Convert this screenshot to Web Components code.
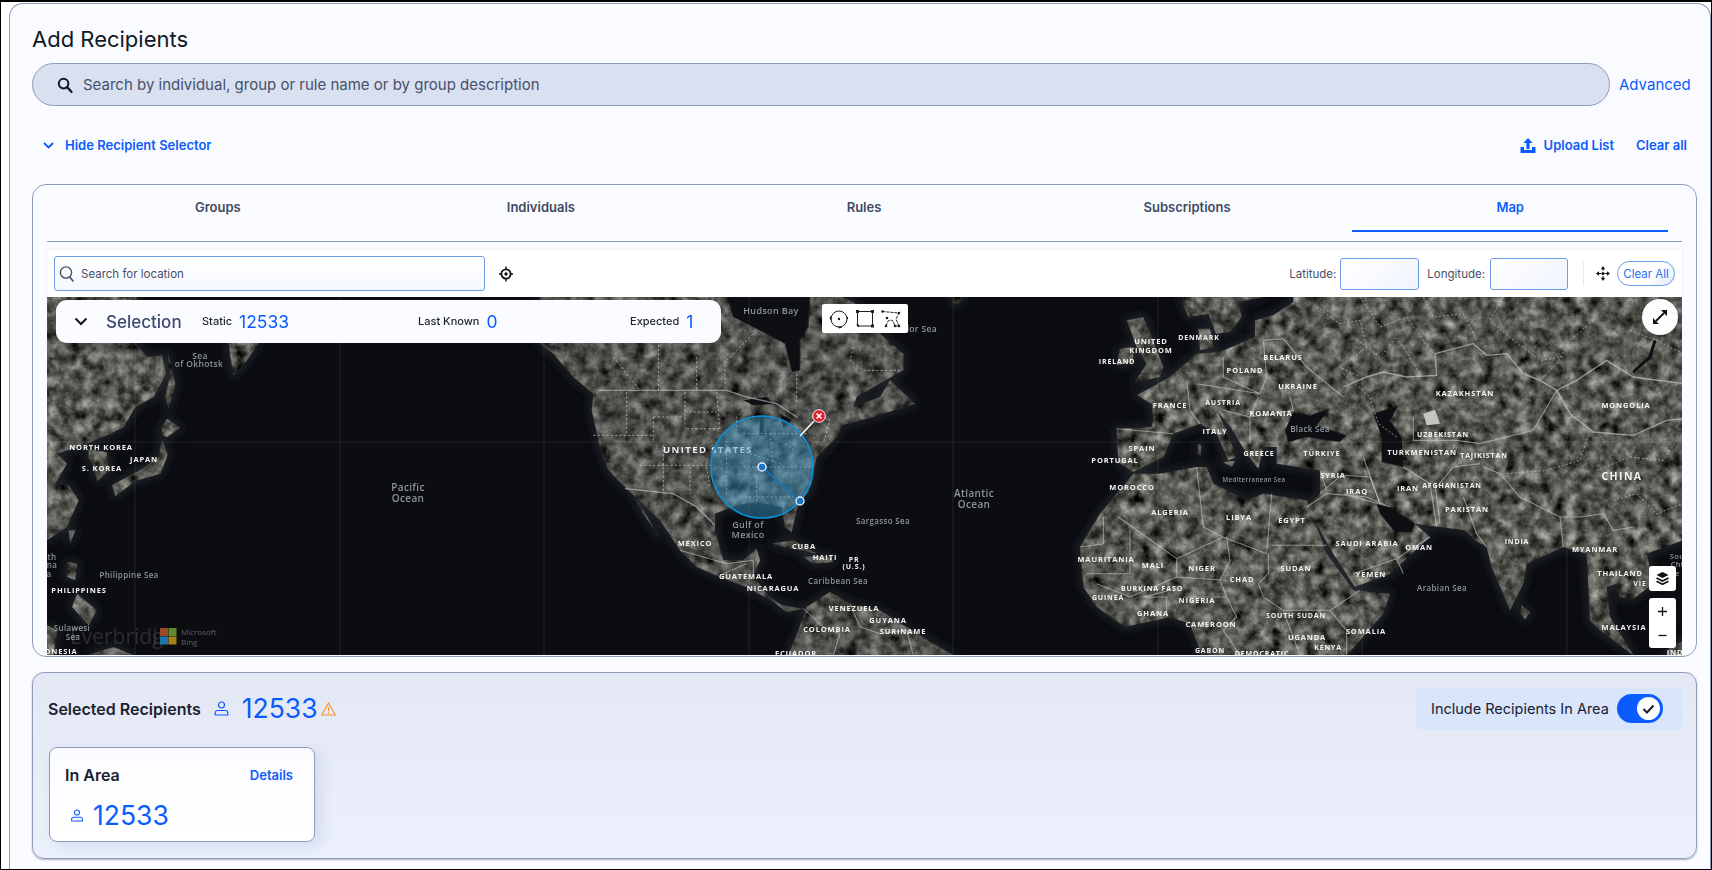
<!DOCTYPE html>
<html lang="en"><head><meta charset="utf-8"><title>Add Recipients</title>
<style>
html,body{margin:0;padding:0;background:#fff}
body{font-family:Inter,"Liberation Sans",sans-serif}
</style></head><body>
<app-frame>
  <recipients-card>
    <page-title>Add Recipients</page-title>
    <search-row></search-row>
    <action-row></action-row>
    <selector-panel>
      <tab-strip></tab-strip>
      <map-toolbar></map-toolbar>
      <geo-map>
        <selection-bar></selection-bar>
      </geo-map>
    </selector-panel>
    <selected-panel></selected-panel>
  </recipients-card>
</app-frame>
<script>
const BLUE='#0b5cff';
class Base extends HTMLElement{
  connectedCallback(){ if(this.shadowRoot) return; this.attachShadow({mode:'open'}).innerHTML=this.render(); }
}
const def=(name,css,html)=>customElements.define(name,class extends Base{render(){return `<style>${css}</style>${typeof html==='function'?html():html}`}});

def('app-frame',`:host{display:block;height:870px;box-sizing:border-box;border:1px solid #000;border-top-width:2px;overflow:hidden;background:#fff;font-family:Inter,"Liberation Sans",sans-serif}`,`<slot></slot>`);

def('recipients-card',`:host{display:block;margin:1px 0 0 8px;height:900px;box-sizing:border-box;border:1px solid #8d9cbb;border-bottom:0;border-radius:14px 14px 0 0;padding:0 13px 0 22px;background:linear-gradient(#fafbfe,#fbfcff)}`,`<slot></slot>`);

def('page-title',`:host{display:block;height:30px;line-height:30px;padding-top:20px;font-size:22px;font-weight:400;color:#111827}`,`<slot></slot>`);

def('search-row',`:host{display:flex;align-items:center;margin-top:9px;height:43px}
.bar{flex:1;height:43px;box-sizing:border-box;border:1px solid #8d9cbb;border-radius:22px;background:#d9e0f0;display:flex;align-items:center;padding-left:24px;color:#46506c;font-size:15px}
svg{margin-right:10px;flex:none}
a{margin:0 9px 0 9px;color:${BLUE};font-size:15px;width:69px;white-space:nowrap}`,
`<div class="bar"><svg width="16" height="16" viewBox="0 0 16 16"><circle cx="6.6" cy="6.6" r="4.8" fill="none" stroke="#111827" stroke-width="2"/><path d="M10.2 10.2L14.4 14.8" stroke="#111827" stroke-width="2.4" stroke-linecap="round"/></svg><span>Search by individual, group or rule name or by group description</span></div><a>Advanced</a>`);

def('action-row',`:host{display:flex;align-items:center;height:20px;margin-top:29px;padding:0 10px 0 11px;color:${BLUE};font-size:13px;font-weight:600}
.l{display:flex;align-items:center;gap:11px;flex:1}
.u{display:flex;align-items:center;gap:8px;margin-right:22px}`,
`<div class="l"><svg width="11" height="7" viewBox="0 0 11 7"><path d="M1 1l4.5 4.5L10 1" fill="none" stroke="${BLUE}" stroke-width="1.8"/></svg><span>Hide Recipient Selector</span></div>
<div class="u"><svg width="16" height="15" viewBox="0 0 16 15"><path d="M8 0l4.6 5H9.6v6H6.4V5H3.4z" fill="${BLUE}"/><path d="M.5 9H4v3h8V9h3.5v6H.5z" fill="${BLUE}"/></svg><span>Upload List</span></div><span>Clear all</span>`);

def('selector-panel',`:host{display:block;margin-top:29px;box-sizing:border-box;border:1px solid #8d9cbb;border-radius:14px;padding:0 14px;height:473px;overflow:hidden;background:#fbfcff}`,`<slot></slot>`);

def('tab-strip',`:host{display:block;border-bottom:1px solid #8d9cbb;height:57px;box-sizing:border-box;padding:0 14px 0 13px}
.t{display:grid;grid-template-columns:repeat(5,1fr);column-gap:7.5px;height:47px}
div div{display:flex;align-items:center;justify-content:center;padding-bottom:3px;box-sizing:border-box;font-size:13px;font-weight:600;color:#3f4a66}
.a{color:${BLUE};border-bottom:2px solid ${BLUE};padding-bottom:1px}`,
`<div class="t"><div>Groups</div><div>Individuals</div><div>Rules</div><div>Subscriptions</div><div class="a">Map</div></div>`);

def('map-toolbar',`:host{display:flex;align-items:center;margin-top:8px;height:47px;box-sizing:border-box;padding:0 7px;background:#fff;box-shadow:0 0 2px rgba(120,140,190,.25);font-size:11.5px;color:#46506c}
.s{width:431px;height:35px;box-sizing:border-box;border:1px solid #6f9ae8;border-radius:3px;display:flex;align-items:center;padding-left:4px;gap:6px;background:linear-gradient(#fff,#f5f8fe)}
.loc{margin-left:14px;flex:1}
i{display:block;box-sizing:border-box;height:32px;border:1px solid #6f9ae8;border-radius:3px;background:linear-gradient(135deg,#fff,#f0f4fe)}
.la{margin:0 4px 0 0}.lo{margin:0 5px 0 8px}
.sep{width:1px;height:24px;background:#e6e9f1;margin:0 12px 0 15px}
.c{margin-left:7px;width:58px;height:25px;box-sizing:border-box;border:1px solid #6f9ae8;border-radius:13px;color:#2a6ff0;display:flex;align-items:center;justify-content:center;background:linear-gradient(135deg,#fff 60%,#e0e9fc)}`,
`<div class="s"><svg width="16" height="18" viewBox="0 0 16 18"><circle cx="7" cy="7.5" r="5.6" fill="none" stroke="#46506c" stroke-width="1.4"/><path d="M10.8 12l3.6 4.6" stroke="#46506c" stroke-width="1.6"/></svg><span>Search for location</span></div>
<svg class="loc" width="14" height="16" viewBox="0 0 14 16" preserveAspectRatio="xMinYMid meet" style="height:16px"><circle cx="7" cy="8" r="4.6" fill="none" stroke="#111" stroke-width="1.8"/><circle cx="7" cy="8" r="1.7" fill="#111"/><path d="M7 .5v3M7 12.5v3M0 8h2.5M11.5 8H14" stroke="#111" stroke-width="1.4"/></svg>
<span class="la">Latitude:</span><i style="width:79px"></i><span class="lo">Longitude:</span><i style="width:78px"></i><b class="sep"></b>
<svg width="14" height="15" viewBox="0 0 14 15"><path d="M7 0l2.2 3.2H4.8zM7 15l-2.2-3.2h4.4zM0 7.5l3-2.2v4.4zM14 7.5l-3 2.2V5.3z" fill="#111"/><circle cx="7" cy="7.5" r="1.6" fill="#111"/><path d="M7 3v2M7 10v2M3 7.5h2M9 7.5h2" stroke="#111" stroke-width="1"/></svg>
<span class="c">Clear All</span>`);

/* map data: [text, x, y, size, kind] kind c=country, s=sea */
const L=[
["Sea",200,356,8.5,'s'],["of Okhotsk",199,364,8.5,'s'],["NORTH KOREA",101,448,7.5],["JAPAN",144,460,7.5],["S. KOREA",102,469,7.5],["Philippine Sea",129,575,8,'s'],["PHILIPPINES",79,591,7.5],["th",52,557,8,'s'],["na",52,565,8,'s'],["a",49,574,8,'s'],["Sulawesi",72,628,8,'s'],["Sea",73,637,8,'s'],["ONESIA",61,652,7.5],
["Pacific",408,488,10,'s'],["Ocean",408,499,10,'s'],
["Hudson Bay",771,311,9,'s'],["UNITED STATES",708,450,9.5,'c2'],["Sargasso Sea",883,521,8,'s'],["Atlantic",974,494,10,'s'],["Ocean",974,505,10,'s'],["Gulf of",748,525,9,'s'],["Mexico",748,535,9,'s'],["MEXICO",695,544,7.5],["CUBA",804,547,7.5],["HAITI",825,558,7.5],["PR",854,560,7],["(U.S.)",854,567,7],["GUATEMALA",746,577,7.5],["NICARAGUA",773,589,7.5],["Caribbean Sea",838,581,8,'s'],["VENEZUELA",854,609,7.5],["GUYANA",888,621,7.5],["SURINAME",903,632,7.5],["COLOMBIA",827,630,7.5],["ECUADOR",796,654,7.5],
["UNITED",1151,342,7.5],["KINGDOM",1151,351,7.5],["DENMARK",1199,338,7],["IRELAND",1117,362,7],["BELARUS",1283,358,7.5],["POLAND",1245,371,7.5],["UKRAINE",1298,387,7.5],["FRANCE",1170,406,7.5],["AUSTRIA",1223,403,7],["ROMANIA",1271,414,7.5],["Black Sea",1310,429,8,'s'],["ITALY",1215,432,7.5],["SPAIN",1142,449,7.5],["PORTUGAL",1115,461,7.5],["GREECE",1259,454,7],["TÜRKIYE",1322,454,7.5],["Mediterranean Sea",1254,480,6.2,'s'],["SYRIA",1333,476,7.5],["MOROCCO",1132,488,7.5],["ALGERIA",1170,513,7.5],["LIBYA",1239,518,7.5],["EGYPT",1292,521,7.5],["IRAQ",1357,492,7.5],["IRAN",1408,489,7.5],["AFGHANISTAN",1452,486,7],["PAKISTAN",1467,510,7.5],["SAUDI ARABIA",1367,544,7.5],["OMAN",1419,548,7.5],["YEMEN",1371,575,7.5],["INDIA",1517,542,7],["Arabian Sea",1442,588,8,'s'],["MYANMAR",1595,550,7.5],["THAILAND",1620,574,7.5],["VIE",1640,584,7],["MALAYSIA",1624,628,7.5],["IND",1675,653,7.5],["Sou",1677,557,7.5,'s'],["Chi",1677,565,7.5,'s'],["Se",1675,574,7.5,'s'],["KAZAKHSTAN",1465,394,7.5],["MONGOLIA",1626,406,7.5],["UZBEKISTAN",1443,435,7],["TURKMENISTAN",1422,453,7.5],["TAJIKISTAN",1484,456,7],["CHINA",1622,477,10.5],["MAURITANIA",1106,560,7.5],["MALI",1153,566,7.5],["NIGER",1202,569,7.5],["CHAD",1242,580,7.5],["SUDAN",1296,569,7.5],["BURKINA FASO",1152,589,7],["GUINEA",1108,598,7],["NIGERIA",1197,601,7.5],["GHANA",1153,614,7.5],["SOUTH SUDAN",1296,616,7],["CAMEROON",1211,625,7.5],["SOMALIA",1366,632,7.5],["UGANDA",1307,638,7.5],["KENYA",1328,648,7],["GABON",1210,651,7],["DEMOCRATIC",1262,654,7]
];
const labels=L.map(([t,x,y,s,k])=>{
  const sea=k==='s';
  const fill=sea?'#8f949b':(k==='c2'?'#e8f0f4':'#f2f2f2');
  const ls=sea?.35:(s>9?1.4:.85);
  return `<text x="${x}" y="${y}" font-size="${s}" fill="${fill}" font-weight="${sea?600:700}" letter-spacing="${ls}" text-anchor="middle" dominant-baseline="central">${t}</text>`}).join('');

const land=`
<g transform="translate(47 298) scale(.33333)">
<path d="M0 0H270L270 145 300 180 345 175 358 230 320 300 265 330 230 390 190 410 120 440 30 470 60 500 25 560 65 565 95 610 60 690 0 730Z"/>
<path d="M545 130H640L600 190 560 235 550 180Z"/><path d="M362 165L385 260 365 335 355 300 368 240Z"/>
<path d="M125 458L178 465 190 520 150 552 140 505 125 485Z"/><path d="M335 410L360 365 400 392 360 420Z"/>
<path d="M345 425L362 475 340 530 265 552 205 598 195 565 285 515 335 480Z"/><path d="M65 700L85 700 70 740Z"/>
<path d="M62 795L90 800 85 850 60 840Z"/><path d="M90 890L150 940 125 985 75 930Z"/><path d="M0 985L30 1000 20 1075H0Z"/><path d="M120 1075L200 1050 260 1075Z"/>
</g>
<g transform="translate(540 298) scale(.33333)" fill-opacity=".86">
<path d="M0 0H905L940 15 990 60 1020 110 1090 170 1090 220 1010 265 950 300 940 330 1020 300 1050 250 1125 320 1000 360 905 385 890 420 830 480 810 580 775 620 755 705 735 690 725 630 650 615 590 625 525 650 525 700 550 790 610 790 650 755 660 790 640 840 690 900 725 925 790 935 740 945 700 915 620 870 540 840 470 810 420 760 360 670 270 585 205 520 180 450 155 340 160 290 100 240 40 170 0 140Z"/>
<path d="M280 595L300 620 360 725 310 650Z"/><path d="M690 740L760 730 830 770 760 755Z"/><path d="M790 780L870 775 880 795 820 800Z"/>
<path d="M745 1075L775 1000 800 930 870 885 930 920 1020 940 1100 990 1180 1040 1240 1075Z"/><path d="M1235 0H1268L1255 22 1240 18Z"/>
</g>
<g transform="translate(930 298) scale(.33333)">
<path d="M750 0L775 60 835 50 858 110 900 105 935 60 925 15 1000 0Z"/><path d="M805 95L840 95 850 150 810 160Z"/>
<path d="M590 70L640 60 665 120 700 210 690 240 615 255 650 200 620 150Z"/><path d="M570 155L610 150 610 195 560 205Z"/>
<path d="M1090 0H2260V730L2150 770 2170 860 2110 905 2070 900 2060 860 2030 870 2040 960 2110 1075 2010 1000 1980 970 1970 770 1900 750 1790 800 1780 860 1740 940 1685 810 1670 750 1635 730 1605 700 1530 690 1455 680 1500 720 1380 830 1275 870 1210 770 1130 630 1170 590 1170 520 1040 500 1040 450 1000 450 985 515 950 470 905 395 860 340 880 380 920 480 895 490 860 410 810 380 730 410 700 480 610 525 565 495 560 395 665 390 670 370 665 320 620 295 720 240 800 170 870 165 975 120 975 70 1030 55 1090 15Z"/>
<path d="M1775 925L1800 945 1785 968 1772 950Z"/><path d="M805 440L815 445 812 475 803 470Z"/><path d="M878 495L915 492 905 510Z"/>
<path d="M1130 610L1190 770 1270 880 1380 890 1360 950 1250 1075H815L780 980 720 960 585 990 500 930 460 870 450 750 510 650 560 590 610 530 690 530 800 510 830 510 850 560 950 610 1000 590Z"/>
<path d="M2220 1050L2260 1030V1075H2210Z"/>
</g>`;

const seas=`
<g transform="translate(540 298) scale(.33333)" fill="#0d0f13"><path d="M560 0H810L805 90 780 130 780 220 755 225 735 140 650 95 580 60Z"/><path d="M610 310L680 300 700 320 640 325Z"/><path d="M660 365L670 360 672 415 658 415Z"/><path d="M720 350L755 370 730 395Z"/></g>
<g transform="translate(930 298) scale(.33333)" fill="#0d0f13"><path d="M1065 400L1090 345 1140 355 1200 335 1160 385 1250 415 1230 435 1130 420 1075 435Z"/><path d="M1330 350L1405 325 1380 370 1415 420 1420 510 1355 495 1355 420Z"/><path d="M1340 620L1375 625 1455 680 1445 705 1395 705 1350 650Z"/></g>
<g transform="translate(1300 298) scale(.33333)"><path d="M1065 130L1050 180 1000 225" stroke="#0d0f13" stroke-width="9" fill="none"/><path d="M370 350L405 338 420 380 380 385Z" fill="#c6c4bf"/></g>`;

const borders=`
<g transform="translate(540 298) scale(.33333)" fill="none" stroke="#cfcfcf" stroke-opacity=".6" stroke-width="3">
<path d="M175 280H560L620 300 710 320 770 360" stroke-width="4" stroke-opacity=".55"/><path d="M255 575L400 590 470 630 525 685" stroke-width="4"/>
<path d="M420 760L560 800 640 790 640 830M540 835L620 800"/><path d="M790 935L850 990 900 1010 880 1075M930 920L960 990 1020 1010 1100 1000 1120 1075"/>
<g stroke-dasharray="7 6" stroke-width="2.6" stroke-opacity=".75"><path d="M260 285V415M435 285V395M340 360V430M340 360H435M160 415H340M530 285L540 400M435 345H530M440 395H540M370 445V590M300 505H510M450 510V590M500 510L510 570"/><path d="M610 410H800M560 430V600M610 510H810M650 540V620M690 410L700 500M600 600H760M610 340L590 360V400M630 470L720 500M735 440L780 470M830 350L870 370 850 440M770 230V320"/>
<path d="M560 190L640 110M555 190V280M470 180V280M355 130V280M220 180L300 280M940 150L930 190 970 220H1080"/></g>
</g>
<g transform="translate(930 298) scale(.33333)" fill="none" stroke="#d2d2d2" stroke-opacity=".55" stroke-width="3.2">
<path d="M565 660L740 785 880 720 1010 770 1025 590M520 660V740L450 750M600 700V830H470M800 510L820 690 880 720M1025 745H1190M1015 770V830L985 860 1000 900 1060 940H1200L1250 1000V1075M890 720L900 790 870 850 890 900H760M720 880L640 900H710V960M500 860L600 900 740 840M740 785L740 840 890 850M890 900L920 960 880 1000 930 1075M1200 940L1260 900 1290 880M1060 940L1110 1075"/>
<path d="M560 395L730 410M770 250L780 340 810 380M880 180V240L990 290 1010 240 1000 130 1060 125 1130 210 1240 300M985 300L960 360 1090 340 1080 300M800 260L990 290M960 360L960 440M880 340L960 360M1170 520L1190 580M1240 535L1320 540 1350 620M1170 590L1240 530M1240 590L1380 630M1130 630L1190 590 1310 600 1380 630M1270 830L1400 785 1500 720M1400 785L1420 830"/>
<path d="M1240 270L1310 240 1360 225 1430 240 1520 235 1515 170 1630 140 1670 175 1730 170 1780 230 1830 250 1880 280 1940 250 2030 190 2110 240 2260 260M1880 280L1920 350 1990 405 2110 415 2210 370 2260 365" stroke-width="4" stroke-opacity=".6"/>
<path d="M1450 360V430H1580L1650 440 1810 400 1880 280M1420 510L1500 560 1520 690M1520 570L1570 510 1650 500M1660 510L1710 530 1770 600 1890 660 1950 660 2020 650 2050 700 2110 690M1600 600L1640 710 1670 750M1890 660L1900 750M1300 480L1350 620M1515 560L1530 680" stroke-width="3.4"/>
<g stroke-dasharray="6 6" stroke-opacity=".75" stroke-width="2.4"><path d="M1160 30L1230 80 1290 70 1310 150 1230 210 1290 240M1290 0L1350 90 1430 60 1480 130 1510 170M1480 0L1510 60 1600 50 1640 130M1720 0L1680 70 1750 130 1830 190 1900 180M1990 70L1920 130 1880 200 1830 250M1270 120L1350 180 1400 120 1470 230M2260 170L2180 130 2100 100M2000 520L2100 480 2200 490 2240 430M1730 530L1850 520 1950 490 1980 400M2050 610L2120 590 2180 650 2260 620M2090 510L2130 580M1240 230L1320 300 1345 380 1400 420"/></g>
</g>`;

def('geo-map',`:host{display:block;position:relative;height:358px;overflow:hidden;background:#0c0e12;font-family:"Open Sans","Noto Sans",sans-serif}
svg.m{display:block;width:1636px;height:358px}
text{font-family:"Open Sans","Noto Sans",sans-serif}
.tools{position:absolute;left:775px;top:7px;width:86px;height:29px;background:#fff;border-radius:2px;display:flex;align-items:center;justify-content:space-around;padding:0 3px;box-sizing:border-box}
.exp{position:absolute;left:1595px;top:2px;width:36px;height:36px;border-radius:50%;background:#fdfdff;display:flex;align-items:center;justify-content:center}
.lay,.zoom{position:absolute;left:1602px;width:27px;background:#fff;border-radius:3px;display:flex;flex-direction:column;align-items:center;justify-content:center}
.lay{top:269px;height:25px}.zoom{top:301px;height:50px;gap:13px}
slot{display:block}`,
`<svg class="m" viewBox="47 298 1636 358" xmlns="http://www.w3.org/2000/svg">
<defs>
<filter id="grain" filterUnits="userSpaceOnUse" x="47" y="298" width="1636" height="358" color-interpolation-filters="sRGB">
<feTurbulence type="fractalNoise" baseFrequency=".085" numOctaves="5" seed="7" result="n"/>
<feColorMatrix in="n" type="matrix" values=".62 .62 0 0 -.28  .62 .62 0 0 -.28  .6 .6 0 0 -.28  0 0 0 0 1" result="g"/>
<feComposite in="g" in2="SourceAlpha" operator="in"/>
</filter>
<filter id="blur" filterUnits="userSpaceOnUse" x="47" y="298" width="1636" height="358"><feGaussianBlur stdDeviation="5"/></filter>
<g id="land">${land}</g>
</defs>
<rect x="47" y="298" width="1636" height="358" fill="#0b0d11"/>
<g filter="url(#blur)" fill="#23262b" stroke="#23262b" stroke-width="14"><use href="#land"/></g>
<g fill="#000" filter="url(#grain)"><use href="#land"/></g>
${seas}
<path d="M135 298V656M340 298V656M544 298V656M749 298V656M953 298V656M1158 298V656M1362 298V656M1567 298V656M47 443H1683" stroke="#fff" stroke-opacity=".09"/>
${borders}
<rect x="47" y="298" width="1636" height="70" fill="url(#x)" opacity="0"/>
<text x="937" y="329" text-anchor="end" font-size="8.5" fill="#8f949b" font-weight="600" letter-spacing=".35" dominant-baseline="central">Labrador Sea</text>
${labels}
<text x="70" y="645" font-size="21" fill="#fff" fill-opacity=".13" font-family="Inter,sans-serif">Everbridge</text>
<path d="M155 628V646" stroke="#fff" stroke-opacity=".15"/>
<rect x="160" y="629" width="8" height="8" fill="#9a4a25"/><rect x="168.500" y="629" width="8" height="8" fill="#5f8a2c"/><rect x="160" y="637.500" width="8" height="8" fill="#1f74a8"/><rect x="168.500" y="637.500" width="8" height="8" fill="#a5811b"/>
<text x="181" y="636" font-size="8" fill="#5d6065">Microsoft</text><text x="181" y="646" font-size="8" fill="#5d6065">Bing</text>
<circle cx="762" cy="468" r="51" fill="#3796c8" fill-opacity=".45" stroke="#0e8fd5" stroke-width="1.6"/>
<path d="M762 468L800 502" stroke="#0e74bd" stroke-width="1.6"/>
<path d="M800 437L814 422" stroke="#f4f4f4" stroke-width="1.6"/>
<circle cx="762" cy="468" r="4" fill="#1c74c4" stroke="#eef4fb" stroke-width="1.3"/>
<circle cx="800" cy="502" r="4" fill="#1c74c4" stroke="#eef4fb" stroke-width="1.3"/>
<circle cx="819" cy="417" r="6.300" fill="#e3202b" stroke="#f5f5f5" stroke-width="1"/><path d="M816.500 414.500l5 5M821.500 414.500l-5 5" stroke="#fff" stroke-width="1.7"/>
</svg>
<slot></slot>
<div class="tools">
<svg width="20" height="20" viewBox="0 0 20 20"><circle cx="10" cy="10" r="8" fill="none" stroke="#222" stroke-width="1"/><circle cx="10" cy="10" r="1.200" fill="#111"/><path d="M2 7l-1 3 2 0M13 18l-3 1 0-2M18 10l1-1-1-1" stroke="#111" stroke-width="1" fill="none"/></svg>
<svg width="18" height="18" viewBox="0 0 18 18"><rect x="1.500" y="1.500" width="15" height="14.500" fill="none" stroke="#222" stroke-width="1"/><path d="M0 0h3v3H0zM15 0h3v3h-3zM15 14.500h3v3h-3zM0 14.500l3 3v-3z" fill="#222"/></svg>
<svg width="20" height="18" viewBox="0 0 20 18"><path d="M1.500 1.500L18 3 15 9l3 7-4 0-2-5 -2-1-3 1L5 16" fill="none" stroke="#222" stroke-width="1" stroke-dasharray="3 1"/><g fill="#222"><circle cx="1.500" cy="1.500" r="1.300"/><circle cx="18" cy="3" r="1.300"/><circle cx="18" cy="16" r="1.300"/><circle cx="14" cy="16" r="1.300"/><circle cx="5" cy="16" r="1.300"/><circle cx="6" cy="8" r="1.300"/></g></svg>
</div>
<div class="exp"><svg width="16" height="16" viewBox="0 0 16 16"><path d="M4 12L12 4" stroke="#111" stroke-width="1.8"/><path d="M9 1h6v6zM7 15H1V9z" fill="#111"/></svg></div>
<div class="lay"><svg width="13" height="13" viewBox="0 0 13 13"><path d="M6.500 0L12.500 3 6.500 6 .5 3z" fill="#111"/><path d="M.5 6l6 3 6-3M.5 9.300l6 3 6-3" fill="none" stroke="#111" stroke-width="1.600"/></svg></div>
<div class="zoom"><svg width="11" height="11" viewBox="0 0 11 11"><path d="M5.500 1v9M1 5.500h9" stroke="#111" stroke-width="1.300"/></svg><svg width="11" height="11" viewBox="0 0 11 11"><path d="M1.500 5.500h8" stroke="#111" stroke-width="1.300"/></svg></div>`);

def('selection-bar',`:host{position:absolute;left:9px;top:3px;width:665px;height:43px;background:#fbfcff;border-radius:11px;display:grid;grid-template-columns:146px 216px 212px 1fr;align-items:center;font-family:Inter,"Liberation Sans",sans-serif;z-index:2}
.h{display:flex;align-items:center;padding-left:18px;gap:18px;font-size:17px;font-weight:500;color:#3f4a70}
.c{display:flex;align-items:center;gap:7px;font-size:11px;font-weight:500;color:#1f2430}
b{font-size:17.500px;font-weight:400;color:${BLUE}}
.c span{position:relative;top:-1px}`,
`<div class="h"><svg width="14" height="9" viewBox="0 0 14 9"><path d="M1.500 1.500L7 7l5.500-5.500" fill="none" stroke="#111" stroke-width="2"/></svg><span>Selection</span></div>
<div class="c"><span>Static</span><b>12533</b></div><div class="c"><span>Last Known</span><b>0</b></div><div class="c"><span>Expected</span><b>1</b></div>`);

const userIcon=(w,h)=>`<svg width="${w}" height="${h}" viewBox="0 0 14 15"><circle cx="7" cy="4" r="3" fill="none" stroke="${BLUE}" stroke-width="1.200"/><path d="M3 9.500h8a2.300 2.300 0 0 1 2.300 2.300V14H.7v-2.200A2.300 2.300 0 0 1 3 9.500z" fill="none" stroke="${BLUE}" stroke-width="1.200"/></svg>`;

def('selected-panel',`:host{display:block;margin-top:15px;height:187px;box-sizing:border-box;border:1px solid #8d9cbb;border-radius:12px;background:linear-gradient(#e4e8f4,#ebf0fc);box-shadow:0 1px 2px rgba(70,85,120,.45);padding:14px 13px 0 15px}
.top{display:flex;align-items:center;height:43px}
.t{font-size:16px;font-weight:600;color:#1b2130;margin-right:13px}
.n{font-size:26.500px;font-weight:400;color:${BLUE};margin:0 3px 0 13px;line-height:1}
.w{flex:1;display:block}
.tg{width:267px;height:43px;box-sizing:border-box;background:#d8e5fb;border-radius:6px;display:flex;align-items:center;padding-left:15px;font-size:14.500px;color:#1b2130;white-space:nowrap}
.sw{margin-left:8px;width:46px;height:29px;border-radius:15px;background:${BLUE};position:relative;flex:none}
.th{position:absolute;right:3px;top:3px;width:23px;height:23px;border-radius:50%;background:#fff;display:flex;align-items:center;justify-content:center}
.card{margin:17px 0 0 1px;width:266px;height:95px;box-sizing:border-box;border:1px solid #8d9cbb;border-radius:8px;background:linear-gradient(#fbfcff,#fff);box-shadow:6px 4px 14px rgba(120,140,205,.2);padding:15px 21px 0 15px}
.r{display:flex;justify-content:space-between;align-items:center;height:24px}
.r b{font-size:16px;font-weight:600;color:#1b2130}.r a{font-size:13px;font-weight:600;color:${BLUE}}
.v{display:flex;align-items:center;margin-top:15px;padding-left:6px}
.v span{font-size:26.500px;color:${BLUE};margin-left:10px;line-height:1}`,
`<div class="top"><span class="t">Selected Recipients</span>${userIcon(15,15)}<span class="n">12533</span><svg class="w" width="15" height="14" viewBox="0 0 15 14" style="flex:none"><path d="M7.500 1L14.300 13H.7z" fill="none" stroke="#f59331" stroke-width="1.200" stroke-linejoin="round"/><path d="M7.500 5v4.200M7.500 10.200v1.200" stroke="#f59331" stroke-width="1.200"/></svg><span style="flex:1"></span>
<div class="tg"><span>Include Recipients In Area</span><div class="sw"><div class="th"><svg width="13" height="10" viewBox="0 0 13 10"><path d="M1.500 5l3.500 3.500 6.500-7" fill="none" stroke="#1b2130" stroke-width="2"/></svg></div></div></div></div>
<div class="card"><div class="r"><b>In Area</b><a>Details</a></div><div class="v">${userIcon(12,13)}<span>12533</span></div></div>`);
</script>
</body></html>
